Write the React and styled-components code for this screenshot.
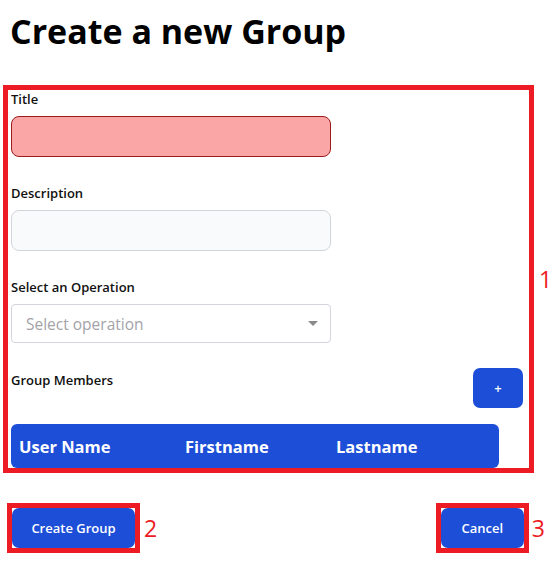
import React from "react";
import styled, { createGlobalStyle } from "styled-components";

const colours = {
  blue: "#1d4ed8",
  annotate: "#ed1c24",
  label: "#111111",
};

const GlobalStyle = createGlobalStyle`
  html, body {
    margin: 0;
    padding: 0;
    background: #ffffff;
  }
  body {
    font-family: "Open Sans", "Noto Sans", sans-serif;
    color: ${colours.label};
  }
  * {
    box-sizing: border-box;
  }
`;

const Page = styled.div`
  width: 559px;
  padding: 0 0 0 3px;
`;

const Heading = styled.h1`
  margin: 0 0 0 7px;
  padding-top: 10px;
  height: 85px;
  font-size: 34px;
  font-weight: 700;
  line-height: 42px;
  color: #000;
  letter-spacing: 0;
`;

// annotation frames drawn on the screenshot
const Annotated = styled.div`
  display: flex;
  align-items: center;
  gap: ${({ gap }) => gap || 4}px;
`;

const Frame = styled.div`
  border: 5px solid ${colours.annotate};
  display: ${({ block }) => (block ? "block" : "inline-flex")};
  width: ${({ width }) => (width ? `${width}px` : "auto")};
`;

const Marker = styled.span`
  color: ${colours.annotate};
  font-family: "Open Sans", sans-serif;
  font-size: 23px;
  line-height: 1;
`;

const Form = styled.div`
  padding: 0 6px 0 3px;
  display: flex;
  flex-direction: column;
`;

const Label = styled.label`
  display: block;
  font-size: 13px;
  font-weight: 600;
  line-height: 18px;
  margin-top: ${({ top }) => top || 0}px;
  margin-bottom: 8px;
`;

const Input = styled.div`
  width: 320px;
  height: 41px;
  border-radius: 8px;
  border: 1px solid ${({ invalid }) => (invalid ? "#9b1c1c" : "#d1d5db")};
  background: ${({ invalid }) => (invalid ? "#faa6a6" : "#f9fafb")};
`;

const SelectControl = styled.div`
  width: 320px;
  height: 39px;
  border: 1px solid #d4d4dc;
  border-radius: 4px;
  background: #fff;
  display: flex;
  align-items: center;
  justify-content: space-between;
  padding: 0 12px 0 14px;
`;

const Placeholder = styled.span`
  font-size: 15.5px;
  color: #a3a3a8;
`;

const Caret = styled.span`
  width: 0;
  height: 0;
  border-left: 5px solid transparent;
  border-right: 5px solid transparent;
  border-top: 5px solid #8a8a8a;
`;

const MembersRow = styled.div`
  display: flex;
  justify-content: space-between;
  align-items: flex-start;
  margin-top: 25px;
`;

const Button = styled.button`
  border: none;
  background: ${colours.blue};
  color: #fff;
  font-family: "Open Sans", sans-serif;
  font-weight: 600;
  font-size: 13px;
  border-radius: 7px;
  height: 40px;
  width: ${({ width }) => width}px;
  padding: 0;
  cursor: pointer;
`;

const TableHead = styled.div`
  margin-top: 16px;
  width: 488px;
  height: 44px;
  background: ${colours.blue};
  border-radius: 6px;
  display: grid;
  grid-template-columns: 166px 151px 1fr;
  align-items: center;
  padding-left: 8px;
  color: #fff;
  font-size: 16.5px;
  font-weight: 700;
`;

const Footer = styled.div`
  display: flex;
  justify-content: space-between;
  margin-top: 30px;
  padding: 0 14px 0 4px;
`;

export default function App() {
  return (
    <>
      <GlobalStyle />
      <Page>
        <Heading>Create a new Group</Heading>
        <Annotated gap={5}>
          <Frame block width={531}>
            <Form>
              <Label>Title</Label>
              <Input invalid />
              <Label top={27}>Description</Label>
              <Input />
              <Label top={27}>Select an Operation</Label>
              <SelectControl>
                <Placeholder>Select operation</Placeholder>
                <Caret />
              </SelectControl>
              <MembersRow>
                <Label top={3}>Group Members</Label>
                <Button width={50}>+</Button>
              </MembersRow>
              <TableHead>
                <span>User Name</span>
                <span>Firstname</span>
                <span>Lastname</span>
              </TableHead>
            </Form>
          </Frame>
          <Marker>1</Marker>
        </Annotated>
        <Footer>
          <Annotated gap={4}>
            <Frame>
              <Button width={123}>Create Group</Button>
            </Frame>
            <Marker>2</Marker>
          </Annotated>
          <Annotated gap={3}>
            <Frame>
              <Button width={83}>Cancel</Button>
            </Frame>
            <Marker>3</Marker>
          </Annotated>
        </Footer>
      </Page>
    </>
  );
}
